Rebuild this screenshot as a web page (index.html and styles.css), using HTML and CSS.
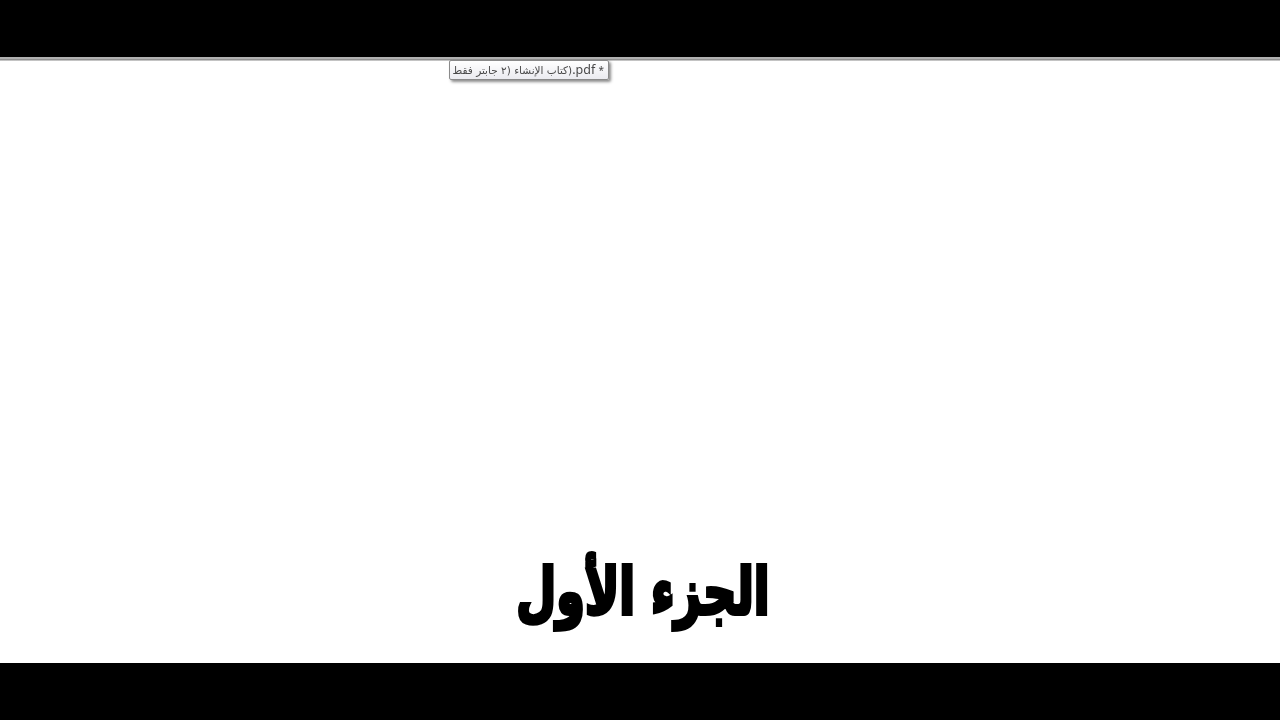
FILE: index.html
```html
<!DOCTYPE html>
<html lang="ar">
<head>
    <meta charset="UTF-8">
    <title>كتاب الإنشاء</title>
    <link rel="stylesheet" href="styles.css">
</head>
<body>
    <!-- Letterbox bar on top -->
    <div class="bar bar-top"></div>

    <div class="page">
        <!-- Window edge -->
        <div class="edge"></div>

        <!-- File name tooltip -->
        <div class="tooltip" dir="rtl"><span class="ext"><span class="star">*</span> pdf.</span>(كتاب الإنشاء (٢ جابتر فقط</div>

        <h1 class="title">الجزء الأول</h1>
    </div>

    <!-- Letterbox bar on bottom -->
    <div class="bar bar-bottom"></div>
</body>
</html>
```

FILE: styles.css
```css
/* General styles */
body {
    margin: 0;
    height: 720px;
    overflow: hidden;
    display: flex;
    flex-direction: column;
    background: #fff;
    font-family: "DejaVu Sans", sans-serif;
}

.bar {
    background: #000;
}

.bar-top {
    height: 57px;
}

.bar-bottom {
    height: 57px;
}

/* White page area */
.page {
    position: relative;
    flex: 1;
    display: flex;
    flex-direction: column;
    justify-content: flex-end;
    align-items: center;
}

.edge {
    position: absolute;
    top: 0;
    left: 0;
    width: 100%;
    height: 4px;
    background: linear-gradient(#b0b0b0, #b0b0b0 50%, #777 50%, #ddd);
}

/* Tooltip over the page */
.tooltip {
    position: absolute;
    top: 3px;
    left: 449px;
    width: 150px;
    height: 18px;
    padding: 0 4px;
    border: 1px solid #8a8a8a;
    border-radius: 2px;
    background: linear-gradient(#fff, #ebebf0);
    box-shadow: 2px 2px 3px rgba(0, 0, 0, 0.45);
    color: #4a4a4a;
    font-size: 10.5px;
    line-height: 18px;
    white-space: nowrap;
    filter: blur(0.3px);
}

.ext {
    font-family: "Noto Sans", sans-serif;
    font-size: 12.5px;
}

.star {
    font-size: 10px;
}

.title {
    margin: 0 0 26px 6px;
    color: #000;
    font-family: "DejaVu Sans", sans-serif;
    font-size: 64px;
    font-weight: bold;
    line-height: 90px;
    -webkit-text-stroke: 4px #000;
    transform: scaleX(0.72);
}
```
